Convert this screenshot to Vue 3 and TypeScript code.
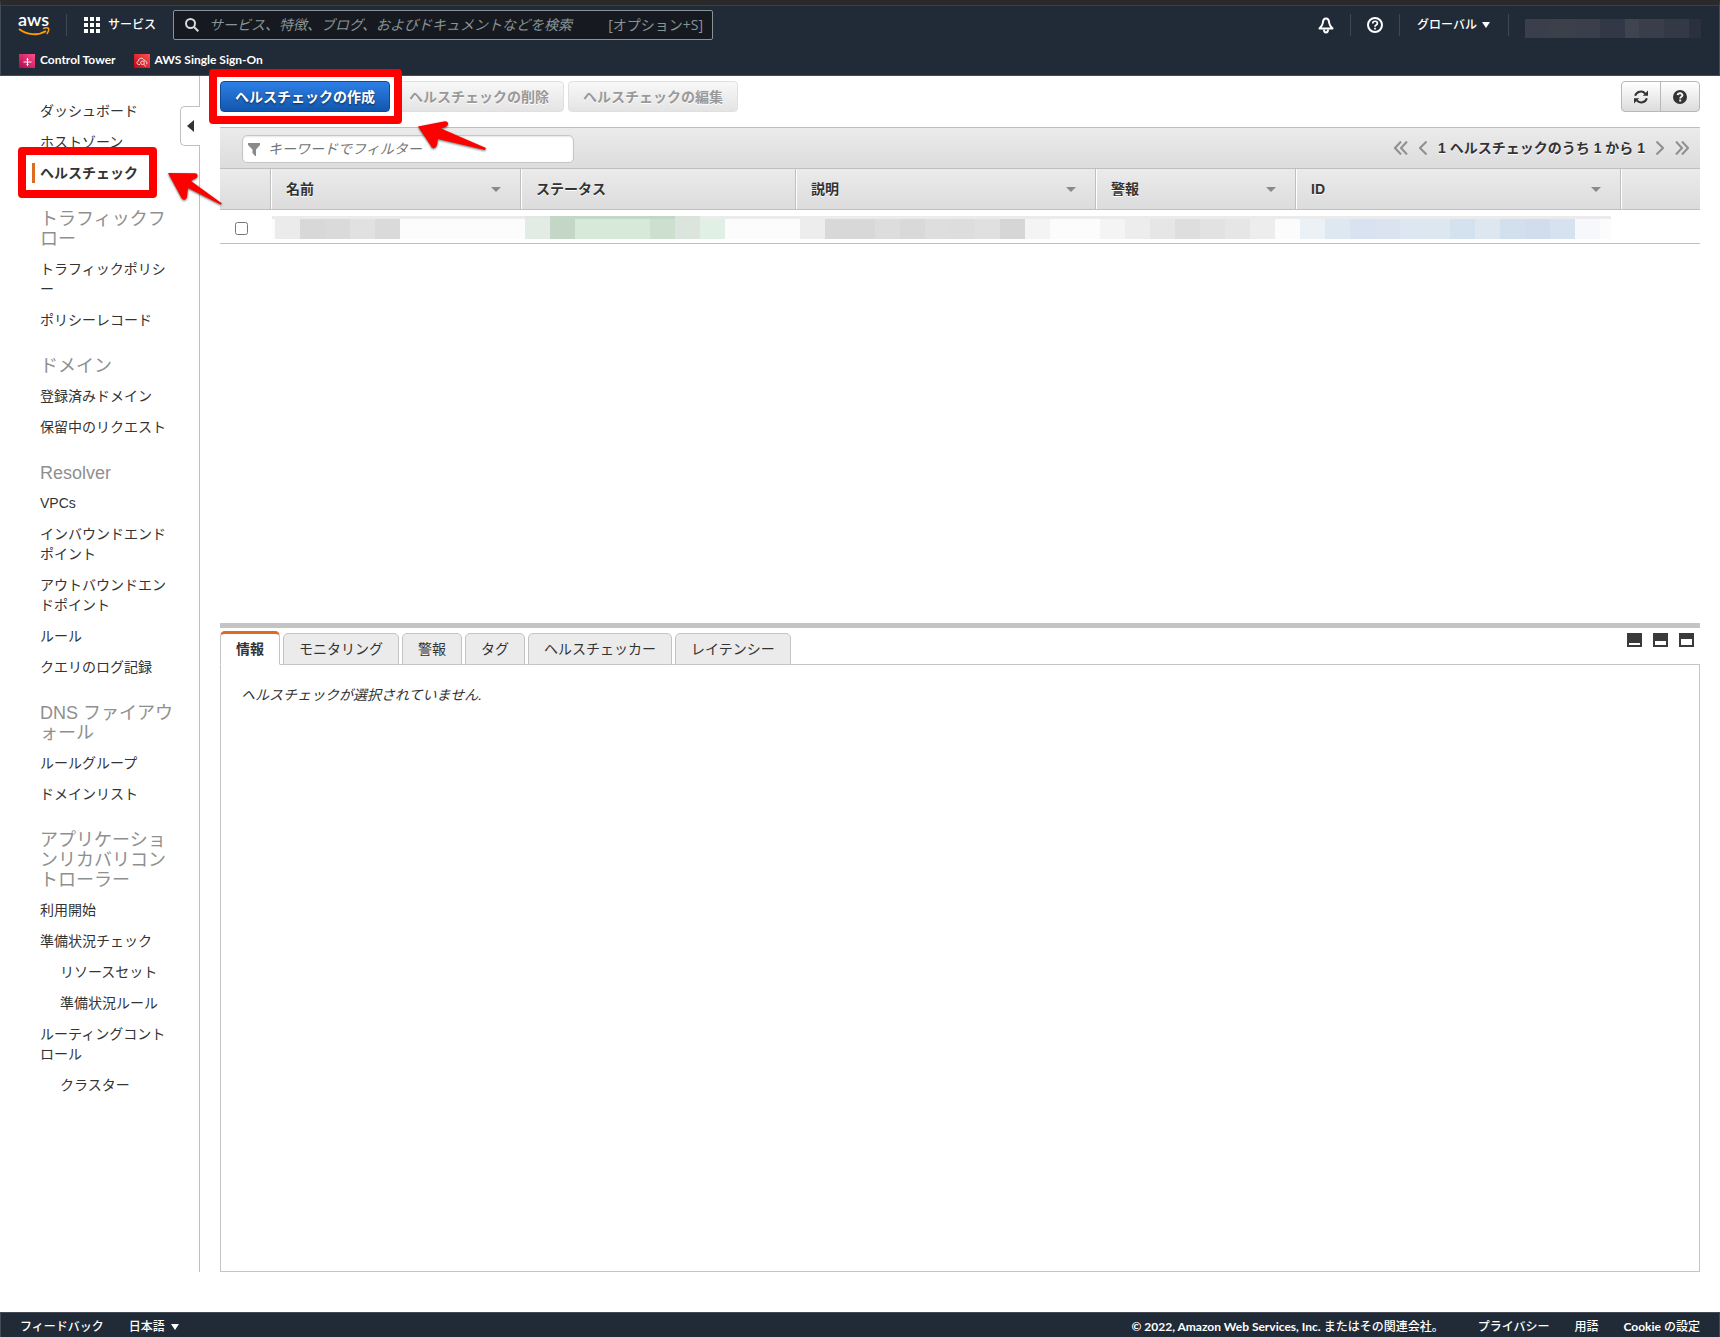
<script setup lang="ts">
import { ref } from 'vue'

interface NavItem {
  label: string
  sub?: boolean
}

interface NavSection {
  title?: string
  items: NavItem[]
}

interface Block {
  color: string
  cap?: string
  width?: number
}

interface Column {
  label: string
  width: number
  sortable: boolean
  blocks: Block[]
}

const sections: NavSection[] = [
  { items: [{ label: 'ダッシュボード' }, { label: 'ホストゾーン' }, { label: 'ヘルスチェック' }] },
  { title: 'トラフィックフロー', items: [{ label: 'トラフィックポリシー' }, { label: 'ポリシーレコード' }] },
  { title: 'ドメイン', items: [{ label: '登録済みドメイン' }, { label: '保留中のリクエスト' }] },
  {
    title: 'Resolver',
    items: [
      { label: 'VPCs' },
      { label: 'インバウンドエンドポイント' },
      { label: 'アウトバウンドエンドポイント' },
      { label: 'ルール' },
      { label: 'クエリのログ記録' },
    ],
  },
  { title: 'DNS ファイアウォール', items: [{ label: 'ルールグループ' }, { label: 'ドメインリスト' }] },
  {
    title: 'アプリケーションリカバリコントローラー',
    items: [
      { label: '利用開始' },
      { label: '準備状況チェック' },
      { label: 'リソースセット', sub: true },
      { label: '準備状況ルール', sub: true },
      { label: 'ルーティングコントロール' },
      { label: 'クラスター', sub: true },
    ],
  },
]

const plain = (...colors: string[]): Block[] => colors.map((color) => ({ color }))

const columns: Column[] = [
  {
    label: '名前',
    width: 250,
    sortable: true,
    blocks: plain('#ebebeb', '#d8d8d8', '#dadada', '#e1e1e1', '#dadada'),
  },
  {
    label: 'ステータス',
    width: 275,
    sortable: false,
    blocks: [
      { color: '#e2ece4', cap: '#e0e8e1' },
      { color: '#c4d6c5', cap: '#c4d6c5' },
      { color: '#d7e9d8', cap: '#c4d6c5' },
      { color: '#d7e9d8', cap: '#c4d6c5' },
      { color: '#d7e9d8', cap: '#c4d6c5' },
      { color: '#cddfce', cap: '#c4d6c5' },
      { color: '#dce5dd', cap: '#dce3dd' },
      { color: '#e1f0e4' },
    ],
  },
  {
    label: '説明',
    width: 300,
    sortable: true,
    blocks: plain('#ededed', '#d8d8d8', '#d8d8d8', '#dddddd', '#d9d9d9', '#dedede', '#dddddd', '#e0e0e0', '#d6d6d6', '#f4f4f4'),
  },
  {
    label: '警報',
    width: 200,
    sortable: true,
    blocks: plain('#f4f4f4', '#ededed', '#e6e6e6', '#dedede', '#e2e2e2', '#e6e6e6', '#ededed'),
  },
  {
    label: 'ID',
    width: 325,
    sortable: true,
    blocks: plain('#ebf1f5', '#dee8f1', '#d8e2f1', '#dae3ef', '#dde7f1', '#dde7f0', '#d4e2f0', '#dee7f0', '#d2dfec', '#d1dded', '#d6e2ef', '#f7f8fb'),
  },
]

const account: Block[] = [
  { color: '#3a3f4b', width: 25 },
  { color: '#3b404b', width: 25 },
  { color: '#3a3f4b', width: 25 },
  { color: '#333846', width: 25 },
  { color: '#3f444f', width: 14 },
  { color: '#393e4a', width: 25 },
  { color: '#343946', width: 25 },
  { color: '#2a303e', width: 12 },
]

const tabs = ['情報', 'モニタリング', '警報', 'タグ', 'ヘルスチェッカー', 'レイテンシー']

const currentPage = ref('ヘルスチェック')
const currentTab = ref('情報')
const checked = ref(false)
const filter = ref('')
const query = ref('')
</script>

<template>
  <div class="page">
    <header class="topnav">
      <div class="topnav-main">
        <a class="logo" href="#" aria-label="AWS">
          <span class="logo-word">aws</span>
          <svg class="logo-smile" width="32" height="9" viewBox="0 0 32 9" fill="none" stroke="#ff9900">
            <path d="M1 2c8 6 19 7 27 2" stroke-width="2" />
            <path d="M25 1.500c3-1 5-.8 5.500 0s-.3 3.500-1.800 5.500" stroke-width="1.500" />
          </svg>
        </a>
        <span class="rule"></span>
        <button class="services" type="button">
          <svg width="16" height="16" viewBox="0 0 16 16" fill="#fff">
            <path d="M0 0h4v4H0zM6 0h4v4H6zM12 0h4v4h-4zM0 6h4v4H0zM6 6h4v4H6zM12 6h4v4h-4zM0 12h4v4H0zM6 12h4v4H6zM12 12h4v4h-4z" />
          </svg>
          サービス
        </button>
        <label class="search">
          <svg width="14" height="14" viewBox="0 0 14 14" fill="none" stroke="#d5dbdb" stroke-width="2">
            <circle cx="5.500" cy="5.500" r="4.500" />
            <path d="M9 9l4.300 4.300" />
          </svg>
          <input v-model="query" type="text" aria-label="検索" placeholder="サービス、特徴、ブログ、およびドキュメントなどを検索" />
          <span class="shortcut">[オプション+S]</span>
        </label>
        <div class="tools">
          <button class="tool" type="button" aria-label="通知">
            <svg width="16" height="17" viewBox="0 0 16 17" fill="none" stroke="#fff" stroke-width="2" stroke-linejoin="round">
              <path d="M8 1.500C5.500 1.500 5 3.500 4.800 6c-.2 2.300-1.300 3.500-3.300 5.500h13c-2-2-3.100-3.200-3.300-5.500C11 3.500 10.500 1.500 8 1.500z" />
              <path d="M6 12.500c0 4 4 4 4 0" />
            </svg>
          </button>
          <span class="rule"></span>
          <button class="tool" type="button" aria-label="ヘルプ">
            <svg width="16" height="16" viewBox="0 0 16 16" fill="none" stroke="#fff" stroke-width="2">
              <circle cx="8" cy="8" r="7" />
              <path d="M5.700 6.500c0-3 4.700-3 4.700 0 0 1.600-2.400 1.500-2.400 3.200M8 10.800v1.700" stroke-width="1.700" />
            </svg>
          </button>
          <span class="rule"></span>
          <button class="region" type="button">グローバル <i class="caret"></i></button>
          <span class="rule"></span>
          <span class="account">
            <span v-for="(b, i) in account" :key="i" :style="{ background: b.color, width: b.width + 'px' }"></span>
          </span>
        </div>
      </div>
      <nav class="favorites" aria-label="お気に入り">
        <a href="#">
          <svg width="16" height="14" viewBox="0 0 16 14">
            <defs>
              <linearGradient id="tower" x1="0" y1="1" x2="1" y2="0">
                <stop offset="0" stop-color="#b0084d" />
                <stop offset="1" stop-color="#ff4f8b" />
              </linearGradient>
            </defs>
            <rect width="16" height="14" fill="url(#tower)" />
            <path d="M8.500 4v8M4.500 8h8M7.500 5.500h2M7.500 10.500h2" fill="none" stroke="#fff" />
          </svg>
          Control Tower
        </a>
        <a href="#">
          <svg width="16" height="14" viewBox="0 0 16 14">
            <defs>
              <linearGradient id="sso" x1="0" y1="1" x2="1" y2="0">
                <stop offset="0" stop-color="#bd0816" />
                <stop offset="1" stop-color="#ff5252" />
              </linearGradient>
            </defs>
            <rect width="16" height="14" fill="url(#sso)" />
            <g fill="none" stroke="#fff" stroke-width=".8">
              <path d="M6 10.500H4.500C2.500 10 2.600 7.500 4.500 7c0-3.500 5-4 6 0 2.500-.3 3 2.500 1.500 3.500" />
              <circle cx="8.500" cy="8.800" r="1.800" />
              <path d="M9.800 10.200l1.800 2.300" />
            </g>
          </svg>
          AWS Single Sign-On
        </a>
      </nav>
    </header>

    <div class="body">
      <aside class="sidebar">
        <nav aria-label="Route 53">
          <section v-for="(section, s) in sections" :key="s">
            <h2 v-if="section.title">{{ section.title }}</h2>
            <ul>
              <li v-for="item in section.items" :key="item.label" :class="{ sub: item.sub, current: item.label === currentPage }">
                <a href="#" @click.prevent="currentPage = item.label">{{ item.label }}</a>
              </li>
            </ul>
          </section>
        </nav>
        <button class="collapse" type="button" aria-label="ナビゲーションを閉じる">
          <svg width="7" height="12" viewBox="0 0 7 12"><path d="M7 0v12L0 6z" fill="#333" /></svg>
        </button>
        <div class="frame frame-nav"></div>
        <svg class="arrow arrow-nav" width="56" height="34" viewBox="0 0 56 34">
          <path d="M1 1l27 .3c4 .5 3 5-.5 5.500L24 9l31 22.500-1.500 1L21 16l-1 9c-1 4-5 3-6 0z" fill="#f00" />
        </svg>
      </aside>

      <main class="content">
        <div class="list-pane">
          <div class="actions">
            <button class="btn primary" type="button">ヘルスチェックの作成</button>
            <button class="btn" type="button" disabled>ヘルスチェックの削除</button>
            <button class="btn" type="button" disabled>ヘルスチェックの編集</button>
            <div class="icon-group">
              <button type="button" aria-label="更新">
                <svg width="14" height="14" viewBox="0 0 14 14">
                  <path d="M1.200 5.800C2.300 1.200 8.500.2 11.200 3.600M12.800 8.200C11.700 12.800 5.500 13.800 2.800 10.400" fill="none" stroke="#333" stroke-width="2" />
                  <path d="M14 .6v5.200H8.800zM0 13.400V8.200h5.200z" fill="#333" />
                </svg>
              </button>
              <button type="button" aria-label="ヘルプ">
                <svg width="14" height="14" viewBox="0 0 14 14" fill="none">
                  <circle cx="7" cy="7" r="7" fill="#333" />
                  <path d="M4.700 5.200c.3-2.600 4.900-2.400 4.700.2C9.300 6.800 7.200 6.700 7.200 8.600M7.200 9.500v2" stroke="#f2f2f2" stroke-width="2" />
                </svg>
              </button>
            </div>
            <div class="frame frame-create"></div>
            <svg class="arrow arrow-create" width="70" height="30" viewBox="0 0 70 30">
              <path d="M1 5.500L28 .3c4 0 4 4.500.5 5.500L24 7.500l45 19.500-1 2-47-11-1 6c-2 5-6 3-6 1z" fill="#f00" />
            </svg>
          </div>

          <div class="toolbar">
            <label class="filter">
              <svg width="12" height="13" viewBox="0 0 12 13"><path d="M0 0h12v2L8 6.500V13H7L4.500 10V6.500L0 2z" fill="#8a8a8a" /></svg>
              <input v-model="filter" type="text" aria-label="フィルター" placeholder="キーワードでフィルター" />
            </label>
            <div class="pager">
              <button type="button" aria-label="最初のページ">
                <svg width="14" height="14" viewBox="0 0 14 14"><path d="M7 .5L1 7l6 6.500M13 .5L7 7l6 6.500" /></svg>
              </button>
              <button type="button" aria-label="前のページ">
                <svg width="8" height="14" viewBox="0 0 8 14"><path d="M7.500 .5L1 7l6.500 6.500" /></svg>
              </button>
              <span>1 ヘルスチェックのうち 1 から 1</span>
              <button type="button" aria-label="次のページ">
                <svg width="8" height="14" viewBox="0 0 8 14"><path d="M.5 .5L7 7 .5 13.500" /></svg>
              </button>
              <button type="button" aria-label="最後のページ">
                <svg width="14" height="14" viewBox="0 0 14 14"><path d="M1 .5L7 7l-6 6.500M7 .5L13 7l-6 6.500" /></svg>
              </button>
            </div>
          </div>

          <table class="grid">
            <colgroup>
              <col class="pick-col" />
              <col v-for="c in columns" :key="c.label" :style="{ width: c.width + 'px' }" />
              <col />
            </colgroup>
            <thead>
              <tr>
                <th></th>
                <th v-for="c in columns" :key="c.label" scope="col">
                  <div class="th"><span>{{ c.label }}</span><i v-if="c.sortable" class="sort"></i></div>
                </th>
                <th></th>
              </tr>
            </thead>
            <tbody>
              <tr>
                <td class="pick"><input v-model="checked" type="checkbox" aria-label="ヘルスチェックを選択" /></td>
                <td v-for="c in columns" :key="c.label">
                  <div class="masked">
                    <span
                      v-for="(b, i) in c.blocks"
                      :key="i"
                      :style="{ background: b.color, borderTopColor: b.cap ?? '#ebebeb' }"
                    ></span>
                  </div>
                </td>
                <td></td>
              </tr>
            </tbody>
          </table>
        </div>

        <div class="splitter"></div>

        <section class="detail">
          <div class="tabbar">
            <div class="tabs" role="tablist">
              <button
                v-for="t in tabs"
                :key="t"
                type="button"
                role="tab"
                :aria-selected="t === currentTab"
                :class="{ active: t === currentTab }"
                @click="currentTab = t"
              >{{ t }}</button>
            </div>
            <div class="layouts">
              <button type="button" aria-label="下部を最小化">
                <svg width="15" height="14"><path d="M0 0h15v14H0zM2 10v2h11v-2z" fill="#3a3a3a" fill-rule="evenodd" /></svg>
              </button>
              <button type="button" aria-label="分割表示">
                <svg width="15" height="14"><path d="M0 0h15v14H0zM2 8v4h11V8z" fill="#3a3a3a" fill-rule="evenodd" /></svg>
              </button>
              <button type="button" aria-label="下部を最大化">
                <svg width="15" height="14"><path d="M0 0h15v14H0zM2 6v6h11V6z" fill="#3a3a3a" fill-rule="evenodd" /></svg>
              </button>
            </div>
          </div>
          <div class="panel" role="tabpanel">
            <p>ヘルスチェックが選択されていません.</p>
          </div>
        </section>
      </main>
    </div>

    <footer class="footer">
      <a href="#">フィードバック</a>
      <button type="button">日本語 <i class="caret"></i></button>
      <span class="copyright"><b>© 2022, Amazon Web Services, Inc.</b> またはその関連会社。</span>
      <a href="#">プライバシー</a>
      <a href="#">用語</a>
      <a href="#"><b>Cookie</b> の設定</a>
    </footer>
  </div>
</template>

<style>
body {
  background: #fff;
}
</style>

<style scoped>
.page {
  display: flex;
  flex-direction: column;
  min-height: 100vh;
  color: #333;
  font-family: "Liberation Sans", "Noto Sans CJK JP", sans-serif;
  font-size: 14px;
  line-height: 20px;
}

.page *,
.page {
  box-sizing: border-box;
}

button,
input {
  font: inherit;
  color: inherit;
}

button {
  padding: 0;
  border: 0;
  background: none;
  white-space: nowrap;
}

a {
  color: inherit;
  text-decoration: none;
}

svg {
  display: block;
  flex: none;
}

/* top navigation */
.topnav {
  height: 76px;
  border: 1px solid #454b56;
  border-top: 5px solid #2a2a2a;
  background: #212b37;
  box-shadow: inset 0 1px #3a3f47;
  color: #fff;
  font-family: "Open Sans", "Noto Sans CJK JP", sans-serif;
  font-size: 12px;
  font-weight: 500;
}

.topnav-main {
  display: flex;
  align-items: center;
  height: 40px;
  padding: 0 18px 0 17px;
}

.logo {
  display: flex;
  flex-direction: column;
  width: 32px;
  padding-bottom: 2px;
}

.logo-word {
  height: 14px;
  font-family: Lato, sans-serif;
  font-size: 18px;
  font-weight: 600;
  line-height: 12px;
}

.rule {
  width: 1px;
  height: 22px;
  background: #3d4754;
}

.logo + .rule {
  margin-left: 16px;
}

.services {
  display: flex;
  align-items: center;
  gap: 8px;
  margin: 0 17px;
}

.search {
  display: flex;
  align-items: center;
  width: 540px;
  height: 30px;
  padding: 0 9px 0 11px;
  border: 1px solid #879596;
  border-radius: 2px;
  background: #16191f;
  color: #879596;
  font-size: 14px;
  font-weight: 400;
}

.search input {
  flex: 1;
  min-width: 0;
  padding: 0 0 0 10px;
  border: 0;
  outline: 0;
  background: none;
}

.search input::placeholder,
.filter input::placeholder {
  color: inherit;
  font-style: italic;
  opacity: 1;
}

.tools {
  display: flex;
  align-items: center;
  gap: 16px;
  margin-left: auto;
}

.region {
  display: flex;
  align-items: center;
  gap: 5px;
  padding: 0 2px 0 1px;
}

.caret {
  border: 4px solid transparent;
  border-top: 6px solid #fff;
  border-bottom: 0;
}

.account {
  display: flex;
  height: 19px;
  margin-top: 6px;
}

.favorites {
  display: flex;
  gap: 18px;
  padding: 5px 18px 0;
  font-family: Lato, sans-serif;
  font-weight: 700;
}

.favorites a {
  display: flex;
  align-items: center;
  gap: 5px;
  height: 20px;
}

.favorites svg {
  margin-top: 2px;
}

/* body */
.body {
  display: flex;
  flex: 1;
  margin-bottom: 40px;
}

.sidebar {
  position: relative;
  flex: none;
  width: 200px;
  padding: 25px 24px 24px 40px;
  border-right: 1px solid #c0c0c0;
}

.sidebar h2 {
  margin: 26px 0 10px;
  color: #8f8f8f;
  font-size: 18px;
  font-weight: 400;
  line-height: 20px;
  line-break: anywhere;
}

.sidebar ul {
  display: flex;
  flex-direction: column;
  gap: 11px;
  margin: 0;
  padding: 0;
  list-style: none;
}

.sidebar li {
  line-break: anywhere;
}

.sidebar li.sub {
  padding-left: 20px;
}

.sidebar li.current {
  margin-left: -8px;
  padding-left: 5px;
  border-left: 3px solid #dd6b20;
  font-weight: 700;
}

.collapse {
  position: absolute;
  top: 30px;
  right: -1px;
  display: flex;
  align-items: center;
  width: 20px;
  height: 40px;
  padding-left: 6px;
  border: 1px solid #c0c0c0;
  border-right: 0;
  border-radius: 5px 0 0 5px;
  background: #fff;
}

/* callouts */
.frame {
  position: absolute;
  border: 8px solid #f00;
  border-radius: 4px;
  pointer-events: none;
}

.frame-nav {
  top: 71px;
  left: 18px;
  width: 139px;
  height: 51px;
}

.frame-create {
  top: -7px;
  left: -11px;
  width: 193px;
  height: 55px;
}

.arrow {
  position: absolute;
  z-index: 2;
  filter: drop-shadow(0 1px 1px rgba(0, 0, 0, 0.6));
  pointer-events: none;
}

.arrow-nav {
  top: 96px;
  left: 167px;
}

.arrow-create {
  top: 45px;
  left: 197px;
}

/* list pane */
.content {
  display: flex;
  flex: 1;
  flex-direction: column;
  min-width: 0;
  padding: 0 20px;
}

.list-pane {
  flex: none;
  height: 547px;
}

.actions {
  position: relative;
  display: flex;
  gap: 4px;
  padding: 5px 0 15px;
}

.btn {
  height: 31px;
  padding: 0 14px;
  border: 1px solid #e0e0e0;
  border-radius: 4px;
  background: linear-gradient(#f8f8f8, #e4e4e4);
  color: #999;
  font-weight: 700;
  text-shadow: 0 1px #fff;
}

.btn.primary {
  border-color: #10499a;
  background: linear-gradient(#2d7fe6, #1257ae);
  color: #fff;
  text-shadow: 0 1px 2px rgba(0, 0, 0, 0.6);
}

.icon-group {
  display: flex;
  height: 31px;
  margin-left: auto;
  border: 1px solid #b8b8b8;
  border-radius: 4px;
  background: linear-gradient(#fff, #dcdcdc);
}

.icon-group button {
  display: flex;
  align-items: center;
  justify-content: center;
  width: 38px;
}

.icon-group button + button {
  width: 39px;
  border-left: 1px solid #b8b8b8;
}

.toolbar {
  display: flex;
  align-items: center;
  justify-content: space-between;
  height: 42px;
  padding: 0 11px 0 22px;
  border: solid #bfbfbf;
  border-width: 1px 0;
  background: linear-gradient(#ebebeb, #dcdcdc);
}

.filter {
  display: flex;
  align-items: center;
  width: 332px;
  height: 28px;
  margin-top: 2px;
  padding: 0 5px;
  border: 1px solid #c6c6c6;
  border-radius: 5px;
  background: #fff;
  box-shadow: inset 0 1px 2px rgba(0, 0, 0, 0.1);
  color: #757575;
}

.filter input {
  flex: 1;
  min-width: 0;
  padding: 0 0 0 8px;
  border: 0;
  outline: 0;
  background: none;
}

.pager {
  display: flex;
  align-items: center;
  gap: 11px;
  font-weight: 700;
  text-shadow: 0 1px #fff;
}

.pager path {
  fill: none;
  stroke: #8f8f8f;
  stroke-width: 2;
}

.grid {
  width: 100%;
  border-spacing: 0;
  table-layout: fixed;
}

.pick-col {
  width: 51px;
}

.grid th {
  height: 41px;
  padding: 0;
  border-right: 1px solid #bfbfbf;
  border-bottom: 1px solid #bfbfbf;
  background: linear-gradient(#ebebeb, #dcdcdc);
  box-shadow: inset 1px 0 #fff;
  text-align: left;
  text-shadow: 0 1px #fff;
}

.grid th:first-child {
  box-shadow: none;
}

.grid th:last-child {
  border-right: 0;
}

.th {
  display: flex;
  align-items: center;
  justify-content: space-between;
  padding: 0 19px 0 15px;
}

.sort {
  border: 5px solid transparent;
  border-top-color: #8a8a8a;
  border-bottom: 0;
}

.grid td {
  height: 34px;
  padding: 2px 0 0;
  border-bottom: 1px solid #bfbfbf;
}

.grid .pick {
  padding: 4px 0 0 15px;
}

.pick input {
  display: block;
  width: 13px;
  height: 13px;
  margin: 0;
}

.masked {
  display: flex;
  height: 23px;
  padding-left: 4px;
  background: linear-gradient(#ebebeb 3px, #fcfcfc 3px);
}

.masked span {
  flex: none;
  width: 25px;
  border-top: 3px solid #ebebeb;
}

.grid td:nth-child(2) .masked {
  margin-left: 1px;
  padding-left: 3px;
}

.grid td:nth-child(6) .masked {
  margin-right: 10px;
}

/* detail pane */
.splitter {
  flex: none;
  height: 5px;
  background: #c4c4c4;
}

.detail {
  display: flex;
  flex: 1;
  flex-direction: column;
  padding-top: 3px;
}

.tabbar {
  display: flex;
  justify-content: space-between;
}

.tabs {
  z-index: 1;
  display: flex;
  align-items: flex-end;
  gap: 3px;
  margin-bottom: -1px;
}

.tabs button {
  height: 32px;
  padding: 0 15px;
  border: 1px solid #c4c4c4;
  border-radius: 5px 5px 0 0;
  background: #ebebeb;
}

.tabs .active {
  height: 34px;
  border-top: 3px solid #dd6b20;
  border-bottom-color: #fff;
  background: #fff;
  font-weight: 700;
}

.layouts {
  display: flex;
  align-items: flex-start;
  gap: 11px;
  padding: 2px 6px 0 0;
}

.panel {
  flex: 1;
  padding: 20px;
  border: 1px solid #c4c4c4;
}

.panel p {
  margin: 0;
  font-style: italic;
}

/* footer */
.footer {
  display: flex;
  align-items: center;
  gap: 25px;
  height: 25px;
  padding: 4px 19px 0;
  border: 1px solid #454b56;
  border-bottom: 0;
  background: #212b37;
  color: #fff;
  font-family: Lato, "Noto Sans CJK JP", sans-serif;
  font-size: 12px;
  font-weight: 500;
  white-space: nowrap;
}

.footer button {
  display: flex;
  align-items: center;
  gap: 6px;
}

.copyright {
  margin-right: 9px;
  margin-left: auto;
}
</style>
